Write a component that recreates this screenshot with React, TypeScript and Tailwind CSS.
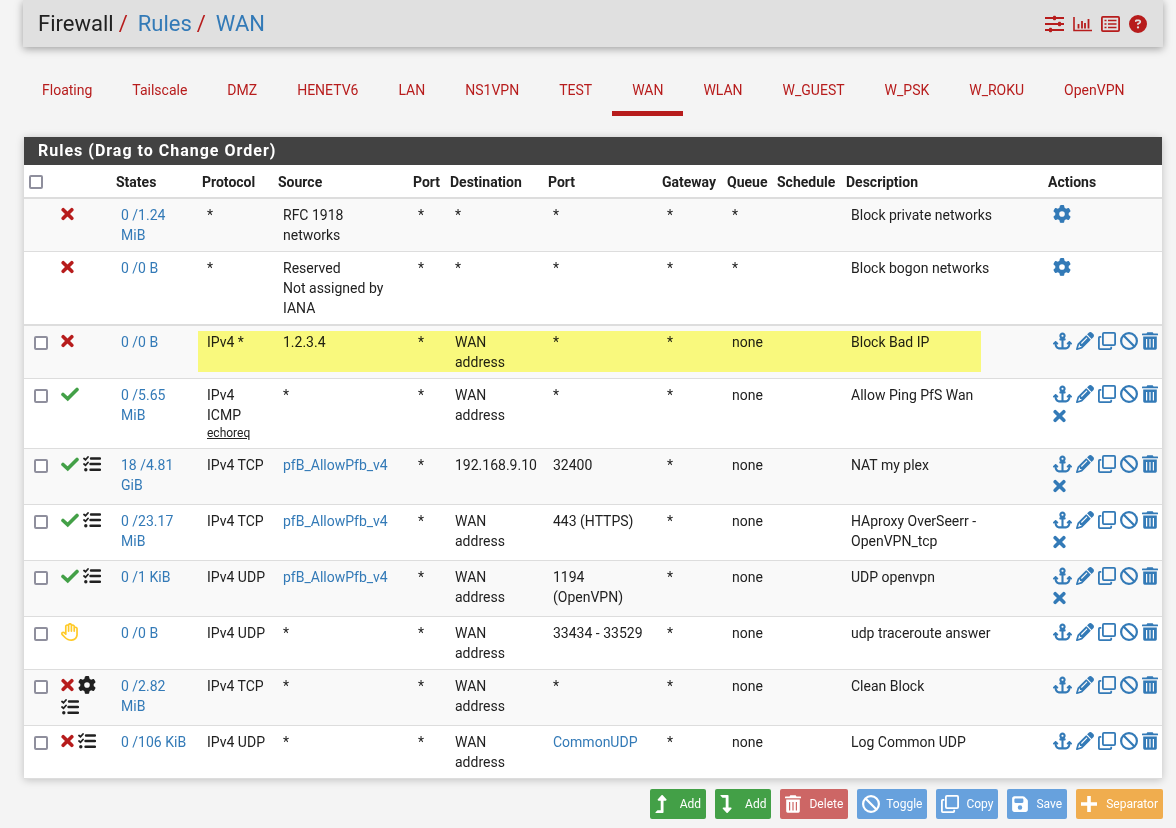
import type { ReactNode } from 'react';
import { FaLevelDownAlt, FaLevelUpAlt } from 'react-icons/fa';
import {
  FaAnchor,
  FaBan,
  FaCircleQuestion,
  FaFloppyDisk,
  FaGear,
  FaPencil,
  FaRegHand,
} from 'react-icons/fa6';

type Status = 'block' | 'pass' | 'reject' | 'advanced' | 'log';

type Rule = {
  status: Status[];
  states: string;
  protocol: string;
  icmp?: string;
  source: string;
  destination: string;
  port: string;
  queue: string;
  description: string;
  sourceAlias?: boolean;
  portAlias?: boolean;
  killStates?: boolean;
  highlighted?: boolean;
};

const tabs = [
  'Floating',
  'Tailscale',
  'DMZ',
  'HENETV6',
  'LAN',
  'NS1VPN',
  'TEST',
  'WAN',
  'WLAN',
  'W_GUEST',
  'W_PSK',
  'W_ROKU',
  'OpenVPN',
];

const headers = ['States', 'Protocol', 'Source', 'Port', 'Destination', 'Port', 'Gateway', 'Queue', 'Schedule', 'Description', 'Actions'];

const systemRules = [
  { states: '0 /1.24 MiB', source: ['RFC 1918 networks'], description: 'Block private networks' },
  { states: '0 /0 B', source: ['Reserved', 'Not assigned by IANA'], description: 'Block bogon networks' },
];

const rules: Rule[] = [
  { status: ['block'], states: '0 /0 B', protocol: 'IPv4 *', source: '1.2.3.4', destination: 'WAN address', port: '*', queue: 'none', description: 'Block Bad IP', highlighted: true },
  { status: ['pass'], states: '0 /5.65 MiB', protocol: 'IPv4 ICMP', icmp: 'echoreq', source: '*', destination: 'WAN address', port: '*', queue: 'none', description: 'Allow Ping PfS Wan', killStates: true },
  { status: ['pass', 'log'], states: '18 /4.81 GiB', protocol: 'IPv4 TCP', source: 'pfB_AllowPfb_v4', sourceAlias: true, destination: '192.168.9.10', port: '32400', queue: 'none', description: 'NAT my plex', killStates: true },
  { status: ['pass', 'log'], states: '0 /23.17 MiB', protocol: 'IPv4 TCP', source: 'pfB_AllowPfb_v4', sourceAlias: true, destination: 'WAN address', port: '443 (HTTPS)', queue: 'none', description: 'HAproxy OverSeerr - OpenVPN_tcp', killStates: true },
  { status: ['pass', 'log'], states: '0 /1 KiB', protocol: 'IPv4 UDP', source: 'pfB_AllowPfb_v4', sourceAlias: true, destination: 'WAN address', port: '1194 (OpenVPN)', queue: 'none', description: 'UDP openvpn', killStates: true },
  { status: ['reject'], states: '0 /0 B', protocol: 'IPv4 UDP', source: '*', destination: 'WAN address', port: '33434 - 33529', queue: 'none', description: 'udp traceroute answer' },
  { status: ['block', 'advanced', 'log'], states: '0 /2.82 MiB', protocol: 'IPv4 TCP', source: '*', destination: 'WAN address', port: '*', queue: 'none', description: 'Clean Block' },
  { status: ['block', 'log'], states: '0 /106 KiB', protocol: 'IPv4 UDP', source: '*', destination: 'WAN address', port: 'CommonUDP', portAlias: true, queue: 'none', description: 'Log Common UDP' },
];

function CrossIcon() {
  return (
    <svg viewBox="0 0 13 18" className="h-[18px] w-[13px]" fill="none" stroke="currentColor" strokeWidth="3.600" strokeLinecap="round">
      <path d="M2.200 4.700l8.600 8.600M10.800 4.700l-8.600 8.600" />
    </svg>
  );
}

function CheckIcon() {
  return (
    <svg viewBox="0 0 18 18" className="size-[18px]" fill="none" stroke="currentColor" strokeWidth="3.600" strokeLinecap="round">
      <path d="M2 9.500l4.700 4.300L16 4.500" />
    </svg>
  );
}

function ChecklistIcon() {
  return (
    <svg viewBox="0 0 18 18" className="size-[18px]" fill="none" stroke="currentColor" strokeLinecap="round">
      <path d="M8 3.500h9M7.500 9h9.500M7.500 14.700h9.500" strokeWidth="2.400" />
      <path d="M1 3.500l1.500 1.300L5 2M1 9l1.500 1.300L5 7.500" strokeWidth="1.800" />
      <circle cx="2.800" cy="14.700" r="1.700" fill="currentColor" stroke="none" />
    </svg>
  );
}

function CloneIcon() {
  return (
    <svg viewBox="0 0 18 18" className="size-[18px]" fill="none" stroke="currentColor" strokeWidth="1.800" strokeLinejoin="round">
      <rect x="4.900" y="0.900" width="12.200" height="12.200" rx="1" />
      <path d="M3.300 4.800H1.800q-.9 0-.9.9v10.500q0 .9.900.9h10.500q.9 0 .9-.9v-1.400" />
    </svg>
  );
}

function TrashIcon() {
  return (
    <svg viewBox="0 0 16 18" className="h-[18px] w-4" fill="currentColor">
      <path d="M5.300.3h5.400l.8 1.200H15.500q.5 0 .5.500v1.300H0V2q0-.5.500-.5h4z" />
      <path
        fillRule="evenodd"
        d="M1.200 4.600h13.600v11.700q0 1.400-1.400 1.400H2.600q-1.400 0-1.400-1.400zM4 7v8.500h1.200V7zM7.400 7v8.500h1.200V7zM10.800 7v8.500H12V7z"
      />
    </svg>
  );
}

function SlidersIcon() {
  return (
    <svg viewBox="0 0 19 18" className="h-[18px] w-[19px]" fill="currentColor">
      <path d="M0 2h19v2H0zM0 8h19v2H0zM0 14h19v2H0z" />
      <rect x="8" y="0.800" width="3" height="4.400" rx="1" />
      <rect x="13" y="6.800" width="3" height="4.400" rx="1" />
      <rect x="4" y="12.800" width="3" height="4.400" rx="1" />
    </svg>
  );
}

function ChartIcon() {
  return (
    <svg viewBox="0 0 19 18" className="h-[18px] w-[19px]" fill="none" stroke="currentColor">
      <path d="M1 2v13.500h18" strokeWidth="1.600" />
      <path d="M5.500 9v4.500M9 6v7.500M12 8v5.500M15.500 4v9.500" strokeWidth="1.800" />
    </svg>
  );
}

function ListIcon() {
  return (
    <svg viewBox="0 0 19 18" className="h-[18px] w-[19px]" fill="none" stroke="currentColor">
      <rect x="0.900" y="1.900" width="17.200" height="14.200" rx="1" strokeWidth="1.800" />
      <path d="M3.500 5.500h2M3.500 9h2M3.500 12.500h2M7 5.500h8.500M7 9h8.500M7 12.500h8.500" strokeWidth="1.700" />
    </svg>
  );
}

function PlusIcon() {
  return (
    <svg viewBox="0 0 16 18" className="h-[18px] w-4" fill="none" stroke="currentColor" strokeWidth="3.600">
      <path d="M8 1v16M0 9h16" />
    </svg>
  );
}

const statusIcons: Record<Status, ReactNode> = {
  block: <CrossIcon />,
  pass: <CheckIcon />,
  reject: <FaRegHand className="w-[18px]" />,
  advanced: <FaGear />,
  log: <ChecklistIcon />,
};

const statusColors: Record<Status, string> = {
  block: 'text-[#b71c1c]',
  pass: 'text-[#43a047]',
  reject: 'text-[#ffca28]',
  advanced: 'text-[#212121]',
  log: 'text-[#212121]',
};

function Link({ children }: { children: ReactNode }) {
  return (
    <a href="#" className="text-[#337ab7]">
      {children}
    </a>
  );
}

function IconLink({ label, children }: { label: string; children: ReactNode }) {
  return (
    <a href="#" aria-label={label} title={label} className="text-[#337ab7]">
      {children}
    </a>
  );
}

function Checkbox({ label }: { label: string }) {
  return (
    <input
      type="checkbox"
      aria-label={label}
      className="block size-3.5 appearance-none rounded-xs border-2 border-[#8f8f9d] bg-white checked:bg-[#337ab7]"
    />
  );
}

function Cell({ children }: { children?: ReactNode }) {
  return <td className="py-1.5 pr-[5px] pl-2.5">{children}</td>;
}

function StatusCell({ status }: { status: Status[] }) {
  return (
    <td className="py-1.5 pl-2.5">
      <div className="flex flex-wrap gap-1 pb-[3px] text-[18px]">
        {status.map((name) => (
          <span key={name} className={statusColors[name]}>
            {statusIcons[name]}
          </span>
        ))}
      </div>
    </td>
  );
}

function ActionButton({ label, icon, className }: { label: string; icon: ReactNode; className: string }) {
  return (
    <button className={`flex h-[30px] items-center rounded-xs px-[5px] text-xs text-white ${className}`}>
      {icon}
      {label}
    </button>
  );
}

function RuleRow({ rule }: { rule: Rule }) {
  return (
    <tr className="relative border-b border-[#ddd] odd:bg-[#f9f9f9]">
      <td className="pt-2.5 pl-2.5">
        <Checkbox label={`Select ${rule.description}`} />
      </td>
      <StatusCell status={rule.status} />
      <Cell>
        <Link>{rule.states}</Link>
      </Cell>
      <Cell>
        {rule.protocol}
        {rule.icmp && <div className="text-xs leading-[17px] underline">{rule.icmp}</div>}
        {rule.highlighted && (
          <span className="absolute top-1.5 right-[181px] left-[174px] h-[41px] bg-[#ffff80] mix-blend-multiply" />
        )}
      </Cell>
      <Cell>{rule.sourceAlias ? <Link>{rule.source}</Link> : rule.source}</Cell>
      <Cell>*</Cell>
      <Cell>{rule.destination}</Cell>
      <Cell>{rule.portAlias ? <Link>{rule.port}</Link> : rule.port}</Cell>
      <Cell>*</Cell>
      <Cell>{rule.queue}</Cell>
      <Cell />
      <Cell>{rule.description}</Cell>
      <td className="py-1.5 pl-2.5">
        <div className="flex flex-wrap gap-1 pb-[3px] text-[18px]">
          <IconLink label="Move checked rules above this one"><FaAnchor className="w-[19px]" /></IconLink>
          <IconLink label="Edit"><FaPencil /></IconLink>
          <IconLink label="Copy"><CloneIcon /></IconLink>
          <IconLink label="Disable"><FaBan /></IconLink>
          <IconLink label="Delete"><TrashIcon /></IconLink>
          {rule.killStates && (
            <IconLink label="Kill states"><CrossIcon /></IconLink>
          )}
        </div>
      </td>
    </tr>
  );
}

export default function App() {
  return (
    <div className="min-h-screen bg-[#f4f4f4] pr-[13px] pl-[23px] font-[Roboto,sans-serif] text-sm leading-5 text-[#212121]">
      <header className="flex h-[47px] items-center justify-between bg-[#e0e0e0] pr-4 pl-[15px] shadow-[0_2px_8px_rgba(0,0,0,0.35)]">
        <ol className="flex text-[22px] leading-6">
          <li>Firewall</li>
          <li className="before:px-[5px] before:text-[#b71c1c] before:content-['/']">
            <a href="#" className="pl-[5px] text-[#337ab7]">Rules</a>
          </li>
          <li className="before:px-[5px] before:text-[#b71c1c] before:content-['/']">
            <a href="#" className="pl-[5px] text-[#337ab7]">WAN</a>
          </li>
        </ol>
        <nav className="flex items-center gap-[9px] pt-px text-[18px] text-[#b71c1c]">
          <a href="#" aria-label="Settings"><SlidersIcon /></a>
          <a href="#" aria-label="Status"><ChartIcon /></a>
          <a href="#" aria-label="Logs"><ListIcon /></a>
          <a href="#" aria-label="Help"><FaCircleQuestion /></a>
        </nav>
      </header>

      <nav className="mt-[33px] -ml-px flex">
        {tabs.map((tab) => (
          <a
            key={tab}
            href="#"
            className={`border-b-[5px] px-5 pb-[11px] text-[#b71c1c] ${tab === 'WAN' ? 'border-[#b71c1c]' : 'border-transparent'}`}
          >
            {tab}
          </a>
        ))}
      </nav>

      <section className="mx-px mt-[21px] bg-white shadow-[0_1px_8px_rgba(0,0,0,0.22)]">
        <h2 className="bg-[#424242] px-3.5 py-1 text-base leading-5 font-bold tracking-[1px] text-white">
          Rules (Drag to Change Order)
        </h2>
        <table className="w-full table-fixed border-collapse text-left">
          <colgroup>
            <col className="w-[27px]" />
            <col className="w-[60px]" />
            <col className="w-[86px]" />
            <col className="w-[76px]" />
            <col className="w-[135px]" />
            <col className="w-[37px]" />
            <col className="w-[98px]" />
            <col className="w-[114px]" />
            <col className="w-[65px]" />
            <col className="w-[50px]" />
            <col className="w-[69px]" />
            <col />
            <col className="w-[119px]" />
          </colgroup>
          <thead>
            <tr className="border-b-2 border-[#ddd]">
              <th className="pt-0.5 pl-[5px]">
                <Checkbox label="Select all rules" />
              </th>
              <th />
              {headers.map((header, i) => (
                <th key={i} className="pt-[7px] pb-[5px] pl-[5px] font-bold whitespace-nowrap">
                  {header}
                </th>
              ))}
            </tr>
          </thead>
          <tbody className="border-b-2 border-[#ddd] align-top">
            {systemRules.map((rule) => (
              <tr key={rule.description} className="border-b border-[#ddd] odd:bg-[#f9f9f9]">
                <td />
                <StatusCell status={['block']} />
                <Cell><Link>{rule.states}</Link></Cell>
                <Cell>*</Cell>
                <Cell>
                  {rule.source.map((line) => (
                    <div key={line}>{line}</div>
                  ))}
                </Cell>
                <Cell>*</Cell>
                <Cell>*</Cell>
                <Cell>*</Cell>
                <Cell>*</Cell>
                <Cell>*</Cell>
                <Cell />
                <Cell>{rule.description}</Cell>
                <td className="py-1.5 pl-2.5">
                  <div className="flex text-[18px]">
                    <IconLink label="Settings"><FaGear /></IconLink>
                  </div>
                </td>
              </tr>
            ))}
          </tbody>
          <tbody className="align-top">
            {rules.map((rule) => (
              <RuleRow key={rule.description} rule={rule} />
            ))}
          </tbody>
        </table>
      </section>

      <div className="mt-2.5 flex justify-end gap-[9px]">
        <ActionButton label="Add" className="gap-[13px] bg-[#43a047]" icon={<FaLevelUpAlt className="h-[18px] w-3" />} />
        <ActionButton label="Add" className="gap-[13px] bg-[#43a047]" icon={<FaLevelDownAlt className="h-[18px] w-3" />} />
        <ActionButton label="Delete" className="gap-2 bg-[#cd6665]" icon={<TrashIcon />} />
        <ActionButton label="Toggle" className="gap-1.5 bg-[#67a1dd]" icon={<FaBan className="size-[18px]" />} />
        <ActionButton label="Copy" className="gap-[7px] bg-[#67a1dd]" icon={<CloneIcon />} />
        <ActionButton label="Save" className="gap-2 bg-[#67a1dd]" icon={<FaFloppyDisk className="h-[18px] w-4" />} />
        <ActionButton label="Separator" className="gap-[9px] bg-[#f0ad4e]" icon={<PlusIcon />} />
      </div>
    </div>
  );
}
